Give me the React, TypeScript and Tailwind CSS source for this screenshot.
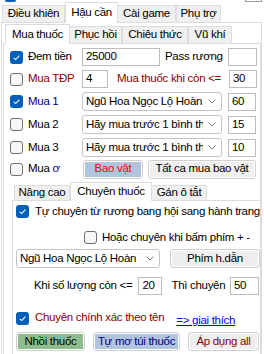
import React from "react"

type Tab = { label: string; w: string }

function TabStrip({ tabs, active, tall, short, className = "" }: { tabs: Tab[]; active: number; tall: string; short: string; className?: string }) {
  return (
    <div className={`flex items-end ${className}`}>
      {tabs.map((t, i) =>
        i === active ? (
          <div
            key={t.label}
            className={`relative z-10 -mb-px flex shrink-0 items-center justify-center border border-b-0 border-[#dcdcdc] bg-white ${t.w} ${tall}`}
          >
            {t.label}
          </div>
        ) : (
          <div
            key={t.label}
            className={`flex shrink-0 items-center justify-center border border-b-0 border-[#dcdcdc] bg-[#f0f0f0] ${t.w} ${short} ${i === active + 1 ? "border-l-0" : ""}`}
          >
            {t.label}
          </div>
        )
      )}
    </div>
  )
}

function Check({ checked }: { checked?: boolean }) {
  return checked ? (
    <span className="flex h-[13px] w-[13px] shrink-0 items-center justify-center rounded-[3px] bg-[#005fb8]">
      <svg viewBox="0 0 10 10" className="h-[9px] w-[9px]">
        <path d="M2 5.3 4.1 7.3 8.2 2.9" fill="none" stroke="white" strokeWidth="1.2" />
      </svg>
    </span>
  ) : (
    <span className="h-[13px] w-[13px] shrink-0 rounded-[3px] border border-[#6e6e6e] bg-[#f7f7f7]" />
  )
}

function Field({ value, className = "" }: { value?: string; className?: string }) {
  return (
    <div className={`flex h-[18px] shrink-0 items-center border border-[#bcbcbc] bg-white px-[3px] ${className}`}>
      {value}
    </div>
  )
}

function Combo({ text, className = "" }: { text: string; className?: string }) {
  return (
    <div className={`flex h-[19px] shrink-0 items-center rounded-[3px] border border-[#c4c4c4] bg-white pl-[3px] pr-[5px] ${className}`}>
      <span className="flex-1 overflow-hidden whitespace-nowrap">{text}</span>
      <svg viewBox="0 0 8 5" className="ml-[5px] h-[5px] w-[8px] shrink-0">
        <path d="M0.5 0.5 4 4 7.5 0.5" fill="none" stroke="#6b6b6b" strokeWidth="0.9" />
      </svg>
    </div>
  )
}

function Btn({ children, fill, className = "" }: { children: React.ReactNode; fill: string; className?: string }) {
  return (
    <div className={`flex h-[19px] shrink-0 rounded-[3px] border border-[#cfcfcf] bg-white p-[1px] ${className}`}>
      <div className={`flex flex-1 items-center justify-center whitespace-nowrap ${fill}`}>{children}</div>
    </div>
  )
}

function BuyRow({ label, color, checked, item, qty }: { label: string; color: string; checked?: boolean; item: string; qty: string }) {
  return (
    <div className="flex h-[23px] items-center">
      <div className="flex w-[72px] shrink-0 items-center gap-[5px]">
        <Check checked={checked} />
        <span className={color}>{label}</span>
      </div>
      <Combo text={item} className="w-[140px]" />
      <Field value={qty} className="ml-[6px] w-[28px]" />
    </div>
  )
}

export default function App() {
  return (
    <div className="h-[354px] w-[264px] overflow-hidden bg-white font-['Liberation_Sans',sans-serif] text-[11.5px] leading-none tracking-[-0.3px] text-black">
      {/* row cut off at the top */}
      <div className="flex h-[2px]">
        <div className="ml-[5px] h-[2px] w-[11px] rounded-b-[2px] bg-[#005fb8]" />
        <div className="ml-auto mr-[2px] h-[2px] w-[17px] border-x border-b border-[#9a9a9a] bg-white" />
      </div>

      <TabStrip
        className="pl-[2px]"
        active={1}
        tall="h-[21px]"
        short="h-[17px]"
        tabs={[
          { label: "Điều khiên", w: "w-[63px]" },
          { label: "Hậu cần", w: "w-[53px]" },
          { label: "Cài game", w: "w-[58px]" },
          { label: "Phụ trợ", w: "w-[45px]" },
        ]}
      />

      <div className="ml-[1px] mr-[2px] h-[340px] border border-[#dcdcdc] bg-white pl-[1px] pt-[1px]">
        <TabStrip
          className="pl-[2px]"
          active={0}
          tall="h-[20px]"
          short="h-[17px]"
          tabs={[
            { label: "Mua thuốc", w: "w-[65px]" },
            { label: "Phục hồi", w: "w-[52px]" },
            { label: "Chiêu thức", w: "w-[66px]" },
            { label: "Vũ khí", w: "w-[44px]" },
          ]}
        />

        <div className="h-[320px] border border-b-0 border-[#dcdcdc] pl-[6px] pt-[2px]">
          <div className="flex h-[22px] items-center">
            <div className="flex w-[72px] shrink-0 items-center gap-[5px]">
              <Check checked />
              <span>Đem tiền</span>
            </div>
            <Field value="25000" className="w-[78px]" />
            <span className="ml-[5px] whitespace-nowrap">Pass rương</span>
            <Field className="ml-auto mr-[3px] w-[29px]" />
          </div>

          <div className="flex h-[22px] items-center">
            <div className="flex w-[72px] shrink-0 items-center gap-[5px]">
              <Check />
              <span className="text-[#8b0000]">Mua TĐP</span>
            </div>
            <Field value="4" className="w-[26px]" />
            <span className="ml-[9px] whitespace-nowrap text-[#8b0000]">Mua thuốc khi còn &lt;=</span>
            <Field value="30" className="ml-auto mr-[3px] w-[28px]" />
          </div>

          <BuyRow label="Mua 1" color="text-[#000080]" checked item="Ngũ Hoa Ngọc Lộ Hoàn" qty="60" />
          <BuyRow label="Mua 2" color="" item="Hãy mua trước 1 bình thuốc" qty="15" />
          <BuyRow label="Mua 3" color="" item="Hãy mua trước 1 bình thuốc" qty="10" />

          <div className="flex h-[20px] items-center">
            <div className="flex w-[73px] shrink-0 items-center gap-[5px]">
              <Check />
              <span>
                Mua <span className="text-[#000080]">ơ</span>
              </span>
            </div>
            <Btn fill="bg-[#b0c4de] text-[#ff0000]" className="w-[60px]">
              Bao vật
            </Btn>
            <Btn fill="bg-[#efefef]" className="ml-[5px] w-[108px]">
              Tất ca mua bao vật
            </Btn>
          </div>

          {/* nested tabs */}
          <div className="mt-[3px] pl-[2px]">
            <TabStrip
              className="pl-[2px]"
              active={1}
              tall="h-[19px]"
              short="h-[15px]"
              tabs={[
                { label: "Nâng cao", w: "w-[56px]" },
                { label: "Chuyên thuốc", w: "w-[82px]" },
                { label: "Gán ô tắt", w: "w-[55px]" },
              ]}
            />
            <div className="h-[160px] border border-b-0 border-r-0 border-[#dcdcdc] pl-[3px]">
              <div className="mt-[4px] flex h-[13px] items-center gap-[6px]">
                <Check checked />
                <span className="whitespace-nowrap">Tự chuyên từ rương bang hội sang hành trang</span>
              </div>

              <div className="mt-[13px] flex h-[13px] items-center gap-[5px] pl-[68px]">
                <Check />
                <span className="whitespace-nowrap">Hoặc chuyên khi bấm phím + -</span>
              </div>

              <div className="mt-[5px] flex items-center">
                <Combo text="Ngũ Hoa Ngọc Lộ Hoàn" className="w-[144px]" />
                <Btn fill="bg-[#efefef]" className="ml-[10px] w-[90px]">
                  Phím h.dẫn
                </Btn>
              </div>

              <div className="mt-[9px] flex items-center">
                <span className="ml-[18px] whitespace-nowrap">Khi số lượng còn &lt;=</span>
                <Field value="20" className="ml-[6px] w-[24px]" />
                <span className="ml-[9px] whitespace-nowrap">Thì chuyên</span>
                <Field value="50" className="ml-auto mr-[1px] w-[29px]" />
              </div>

              <div className="mt-[16px] flex h-[14px] items-center">
                <Check checked />
                <span className="ml-[6px] whitespace-nowrap text-[#8b0000]">Chuyên chính xác theo tên</span>
                <span className="ml-[12px] mt-[6px] whitespace-nowrap text-[#0000ff] underline">=&gt; giai thích</span>
              </div>

              <div className="mt-[7px] flex items-center">
                <Btn fill="bg-[#8fbc8f]" className="w-[69px]">
                  Nhồi thuốc
                </Btn>
                <Btn fill="bg-[#b0c4de] text-[#000080]" className="ml-[8px] w-[87px]">
                  Tự mơ túi thuốc
                </Btn>
                <Btn fill="bg-[#efefef] text-[#8b0000]" className="ml-[8px] w-[71px]">
                  Áp dụng all
                </Btn>
              </div>
            </div>
          </div>
        </div>
      </div>
    </div>
  )
}
